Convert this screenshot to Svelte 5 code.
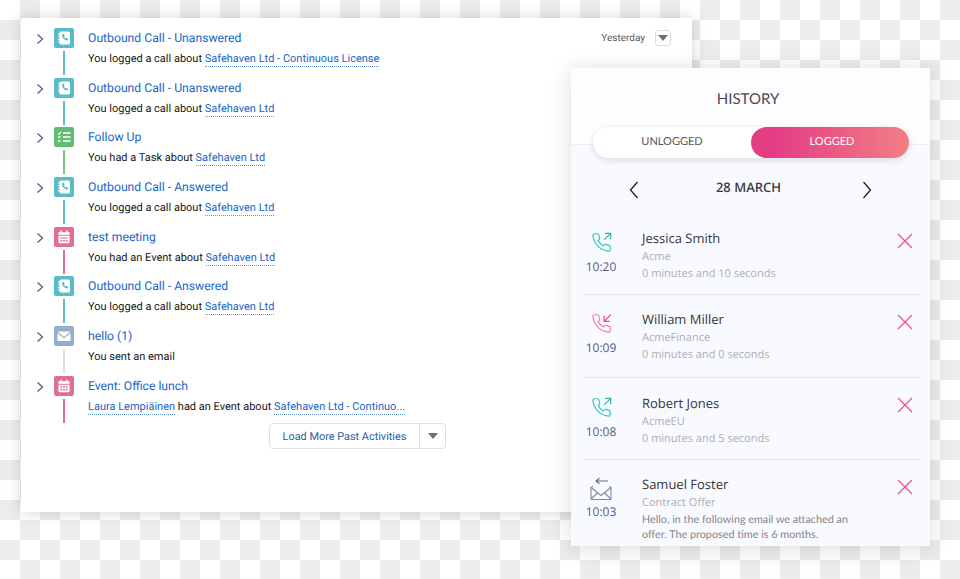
<script>
  const activities = [
    { kind: 'call', title: 'Outbound Call - Unanswered', before: 'You logged a call about', link: 'Safehaven Ltd - Continuous License' },
    { kind: 'call', title: 'Outbound Call - Unanswered', before: 'You logged a call about', link: 'Safehaven Ltd' },
    { kind: 'task', title: 'Follow Up', before: 'You had a Task about', link: 'Safehaven Ltd' },
    { kind: 'call', title: 'Outbound Call - Answered', before: 'You logged a call about', link: 'Safehaven Ltd' },
    { kind: 'event', title: 'test meeting', before: 'You had an Event about', link: 'Safehaven Ltd' },
    { kind: 'call', title: 'Outbound Call - Answered', before: 'You logged a call about', link: 'Safehaven Ltd' },
    { kind: 'email', title: 'hello (1)', before: 'You sent an email', link: '' },
    { kind: 'event', title: 'Event: Office lunch', person: 'Laura Lempiäinen', before: 'had an Event about', link: 'Safehaven Ltd - Continuo...' }
  ];

  const history = [
    { type: 'out', time: '10:20', name: 'Jessica Smith', company: 'Acme', detail: '0 minutes and 10 seconds' },
    { type: 'in', time: '10:09', name: 'William Miller', company: 'AcmeFinance', detail: '0 minutes and 0 seconds' },
    { type: 'out', time: '10:08', name: 'Robert Jones', company: 'AcmeEU', detail: '0 minutes and 5 seconds' },
    { type: 'mail', time: '10:03', name: 'Samuel Foster', company: 'Contract Offer', body: 'Hello, in the following email we attached an offer. The proposed time is 6 months.' }
  ];

  const handset = 'M22 16.92v3a2 2 0 0 1-2.18 2 19.79 19.79 0 0 1-8.63-3.07 19.5 19.5 0 0 1-6-6 19.79 19.79 0 0 1-3.07-8.67A2 2 0 0 1 4.11 2h3a2 2 0 0 1 2 1.72 12.84 12.84 0 0 0 .7 2.81 2 2 0 0 1-.45 2.11L8.09 9.91a16 16 0 0 0 6 6l1.27-1.27a2 2 0 0 1 2.11-.45 12.84 12.84 0 0 0 2.81.7A2 2 0 0 1 22 16.92z';
</script>

<div class="canvas">
  <section class="feed">
    <div class="when">
      <span>Yesterday</span>
      <span class="mini-btn"><i class="caret"></i></span>
    </div>

    {#each activities as item}
      <div class="activity">
        <svg class="chevron" viewBox="0 0 8 12" width="8" height="12">
          <path d="M1.5 1.5 6.5 6l-5 4.5" fill="none" stroke="#54698d" stroke-width="1.4" />
        </svg>
        <div class="rail">
          <div class="tile {item.kind}">
            {#if item.kind === 'call'}
              <svg viewBox="0 0 20 20" width="20" height="20">
                <rect x="5.5" y="3.500" width="10.500" height="13" rx="1.6" fill="#fff" />
                <path d="M4 6h2.600M4 8.600h2.600M4 11.200h2.600M4 13.800h2.600" stroke="#fff" stroke-width="1" />
                <path d="M8.700 6c-1 .6-.8 2.800.7 4.500 1.500 1.700 3.400 2.400 4.400 1.700l.5-.9-1.800-1.500-.9.600c-.7-.4-1.300-1.200-1.600-2l.7-.6-1.100-2.200z" fill="#5bbcc9" />
              </svg>
            {:else if item.kind === 'task'}
              <svg viewBox="0 0 20 20" width="20" height="20" fill="none" stroke="#fff">
                <path d="M4 6.200 5.200 7.400 7 4.800" stroke-width="1.1" />
                <path d="M9 6h7.500M9 10h7.500M9 14h7.500" stroke-width="1.6" />
                <path d="M4 10h2.600M4 14h2.600" stroke-width="1.6" />
              </svg>
            {:else if item.kind === 'event'}
              <svg viewBox="0 0 20 20" width="20" height="20">
                <path d="M4.500 5.200h11v2.600h-11z" fill="#fff" />
                <path d="M6.600 3.600h1.300v2.200H6.600zM12.100 3.600h1.300v2.200h-1.300z" fill="#fff" />
                <path d="M4.500 8.800h11v6.400a1 1 0 0 1-1 1h-9a1 1 0 0 1-1-1z" fill="#fff" />
                <path d="M6.400 10.200h1.800v1.600H6.400zM9.100 10.200h1.800v1.600H9.100zM11.800 10.200h1.800v1.600h-1.800zM6.400 12.900h1.800v1.600H6.400zM9.100 12.900h1.800v1.600H9.100zM11.800 12.900h1.800v1.600h-1.800z" fill="#e0708f" />
              </svg>
            {:else}
              <svg viewBox="0 0 20 20" width="20" height="20">
                <path d="M3.500 5.500h13L10 11z" fill="#fff" />
                <path d="M3.500 7 10 12.400 16.500 7v7a.9.9 0 0 1-.9.9H4.400a.9.9 0 0 1-.9-.9z" fill="#fff" />
              </svg>
            {/if}
          </div>
          <div class="line {item.kind}"></div>
        </div>
        <div class="copy">
          <div class="title">{item.title}</div>
          <div class="sub">
            {#if item.person}<span class="link">{item.person}</span>{' '}{/if}{item.before}{#if item.link}{' '}<span class="link">{item.link}</span>{/if}
          </div>
        </div>
      </div>
    {/each}

    <div class="more">
      <span class="more-label">Load More Past Activities</span>
      <span class="more-caret"><i class="caret"></i></span>
    </div>
  </section>

  <section class="panel">
    <header class="panel-head">
      <h1>HISTORY</h1>
      <div class="toggle">
        <span>UNLOGGED</span>
        <span class="on">LOGGED</span>
      </div>
    </header>

    <div class="day">
      <svg viewBox="0 0 10 18" width="10" height="18"><path d="M8.500 1 1.500 9l7 8" fill="none" stroke="#222" stroke-width="1.3" /></svg>
      <span>28 MARCH</span>
      <svg viewBox="0 0 10 18" width="10" height="18"><path d="M1.500 1l7 8-7 8" fill="none" stroke="#222" stroke-width="1.3" /></svg>
    </div>

    <ul class="log">
      {#each history as row}
        <li class="entry">
          <div class="stamp">
            {#if row.type === 'mail'}
              <svg class="mail-icon" viewBox="0 0 24 24" width="24" height="24" fill="none" stroke="#8087a6" stroke-width="1.1">
                <path d="M19 4H7M10.500 1.300 7 4l3.500 2.700" stroke="#5f6a8c" />
                <path d="M4 9.500 2 10.500v11a1 1 0 0 0 1 1h18a1 1 0 0 0 1-1v-11l-2-1" />
                <path d="M2 10.500l10 8 10-8M2 22l7-6.500M22 22l-7-6.500" />
              </svg>
            {:else}
              <svg viewBox="0 0 24 24" width="21" height="21" fill="none" stroke-width="1.4">
                <path d={handset} stroke={row.type === 'out' ? '#35cbc3' : '#f5849b'} />
                {#if row.type === 'out'}
                  <path d="M16 1.500h6.500V8M22.500 1.500 15 9" stroke="#22bca6" />
                {:else}
                  <path d="M15 3v6.500h6.500M15 9.500 22.500 2" stroke="#ee4f80" />
                {/if}
              </svg>
            {/if}
            <span class="time">{row.time}</span>
          </div>
          <div class="info">
            <div class="name">{row.name}</div>
            <div class="muted">{row.company}</div>
            {#if row.body}
              <p class="body">{row.body}</p>
            {:else}
              <div class="muted">{row.detail}</div>
            {/if}
          </div>
          <svg class="close" viewBox="0 0 16 16" width="16" height="16">
            <path d="M1 1l14 14M15 1 1 15" stroke="#ee4f80" stroke-width="1.2" fill="none" />
          </svg>
        </li>
      {/each}
    </ul>
  </section>
</div>

<style>
  :global(body) {
    margin: 0;
    overflow: hidden;
  }

  .canvas {
    position: relative;
    width: 960px;
    height: 579px;
    overflow: hidden;
    background: repeating-conic-gradient(#ececec 0 25%, #fff 0 50%) 0 0 / 40px 40px;
    font-family: "Open Sans", sans-serif;
    text-rendering: geometricPrecision;
  }

  /* both cards float on the checkerboard, the panel overlaps the feed */
  .feed {
    position: absolute;
    left: 21px;
    top: 18px;
    width: 671px;
    height: 494px;
    box-sizing: border-box;
    padding: 10px 0 0 15px;
    background: #fff;
    box-shadow: 0 0 14px rgba(0, 0, 0, 0.17);
    font-family: Roboto, sans-serif;
  }

  .when {
    position: absolute;
    top: 12px;
    right: 21px;
    display: flex;
    align-items: center;
    gap: 10px;
    font-size: 10px;
    color: #54595f;
  }

  .mini-btn {
    display: flex;
    align-items: center;
    justify-content: center;
    width: 14px;
    height: 14px;
    border: 1px solid #d8dde6;
    border-radius: 3px;
  }

  .caret {
    display: block;
    width: 0;
    height: 0;
    border-left: 5px solid transparent;
    border-right: 5px solid transparent;
    border-top: 6px solid #706e6b;
  }

  .activity {
    display: flex;
    height: 49.700px;
    align-items: flex-start;
  }

  .chevron {
    margin-top: 5px;
    flex: none;
  }

  .rail {
    display: flex;
    flex-direction: column;
    align-items: center;
    width: 20px;
    margin-left: 10px;
    flex: none;
  }

  .tile {
    width: 20px;
    height: 20px;
    border-radius: 2px;
  }

  .tile svg {
    display: block;
  }

  .tile.call { background: #5bbcc9; }
  .tile.task { background: #64bb74; }
  .tile.event { background: #e0708f; }
  .tile.email { background: #95aec9; }

  .line {
    width: 2px;
    height: 24px;
    margin-top: 3px;
  }

  .line.call { background: #5bbcc9; }
  .line.task { background: #78c487; }
  .line.event { background: #e0708f; }
  .line.email { background: #dcdcdc; }

  .copy {
    margin-left: 14px;
    padding-top: 2px;
  }

  .title {
    font-size: 12.200px;
    line-height: 16px;
    color: #1a66c4;
    white-space: nowrap;
  }

  .sub {
    margin-top: 5px;
    font-size: 11px;
    line-height: 16px;
    color: #16181b;
    white-space: nowrap;
  }

  .link {
    color: #1a66c4;
    border-bottom: 1px dotted #5f93d6;
    padding-bottom: 1px;
  }

  .more {
    position: absolute;
    left: 248px;
    top: 405px;
    display: flex;
    height: 24px;
    border: 1px solid #dcdfe3;
    border-radius: 4px;
    font-size: 10.900px;
    color: #2e5a9c;
  }

  .more-label {
    display: flex;
    align-items: center;
    width: 149px;
    justify-content: center;
    border-right: 1px solid #dcdfe3;
  }

  .more-caret {
    display: flex;
    align-items: center;
    justify-content: center;
    width: 25px;
  }

  .panel {
    position: absolute;
    left: 571px;
    top: 68px;
    width: 359px;
    height: 478px;
    overflow: hidden;
    background: #f9faff;
    box-shadow: 0 2px 22px rgba(0, 0, 0, 0.14);
  }

  .panel-head {
    position: relative;
    height: 77px;
    background: #fdfdff;
    border-bottom: 1px solid #eeeff4;
    box-sizing: border-box;
  }

  h1 {
    margin: 0;
    padding: 22px 5px 0 0;
    text-align: center;
    font: 400 15px/18px Lato, sans-serif;
    color: #4a4a4f;
  }

  .toggle {
    position: absolute;
    left: 22px;
    top: 59px;
    display: grid;
    grid-template-columns: 158px 158px;
    width: 316px;
    height: 31px;
    border-radius: 16px;
    background: #fff;
    box-shadow: 0 2px 7px rgba(60, 60, 90, 0.16);
    font: 400 11px/30px Lato, sans-serif;
    text-align: center;
    color: #55555a;
    z-index: 1;
  }

  .toggle .on {
    border-radius: 16px;
    color: #fff;
    padding-left: 4px;
    background: linear-gradient(90deg, #e53d84 15%, #f07f84 100%);
  }

  .day {
    display: grid;
    grid-template-columns: 10px 1fr 10px;
    align-items: center;
    box-sizing: border-box;
    height: 69px;
    padding: 14px 58px 0 58px;
    font-size: 13px;
    font-weight: 600;
    color: #3d3e42;
  }

  .day span {
    text-align: center;
    padding-right: 4px;
  }

  .day svg {
    margin-top: 6px;
  }

  .log {
    list-style: none;
    margin: 0 9px 0 12px;
    padding: 0;
  }

  .entry {
    position: relative;
    display: flex;
    height: 81px;
    border-bottom: 1px solid #e4e5ea;
  }

  .entry:first-child {
    height: 80px;
  }

  .entry:nth-child(2) {
    height: 82px;
  }

  .entry:last-child {
    border-bottom: 0;
  }

  .stamp {
    display: flex;
    flex-direction: column;
    align-items: center;
    width: 36px;
    padding-top: 18px;
    flex: none;
  }

  .entry:nth-child(3) .stamp {
    padding-top: 19px;
  }

  .entry:nth-child(3) .info {
    padding-top: 16px;
  }

  .mail-icon {
    margin: -1px 0 -3px;
  }

  .time {
    margin-top: 6px;
    font-size: 12px;
    line-height: 16px;
    color: #54597a;
  }

  .info {
    margin-left: 23px;
    padding-top: 15px;
    width: 225px;
  }

  .name {
    font-size: 13px;
    line-height: 19px;
    color: #35363a;
  }

  .muted {
    font-size: 11px;
    line-height: 16px;
    margin-top: 1px;
    color: #adadb3;
  }

  .body {
    margin: 1px 0 0;
    font: 400 10.800px/15px Lato, sans-serif;
    color: #85858b;
  }

  .close {
    position: absolute;
    right: 8px;
    top: 19px;
  }
</style>
